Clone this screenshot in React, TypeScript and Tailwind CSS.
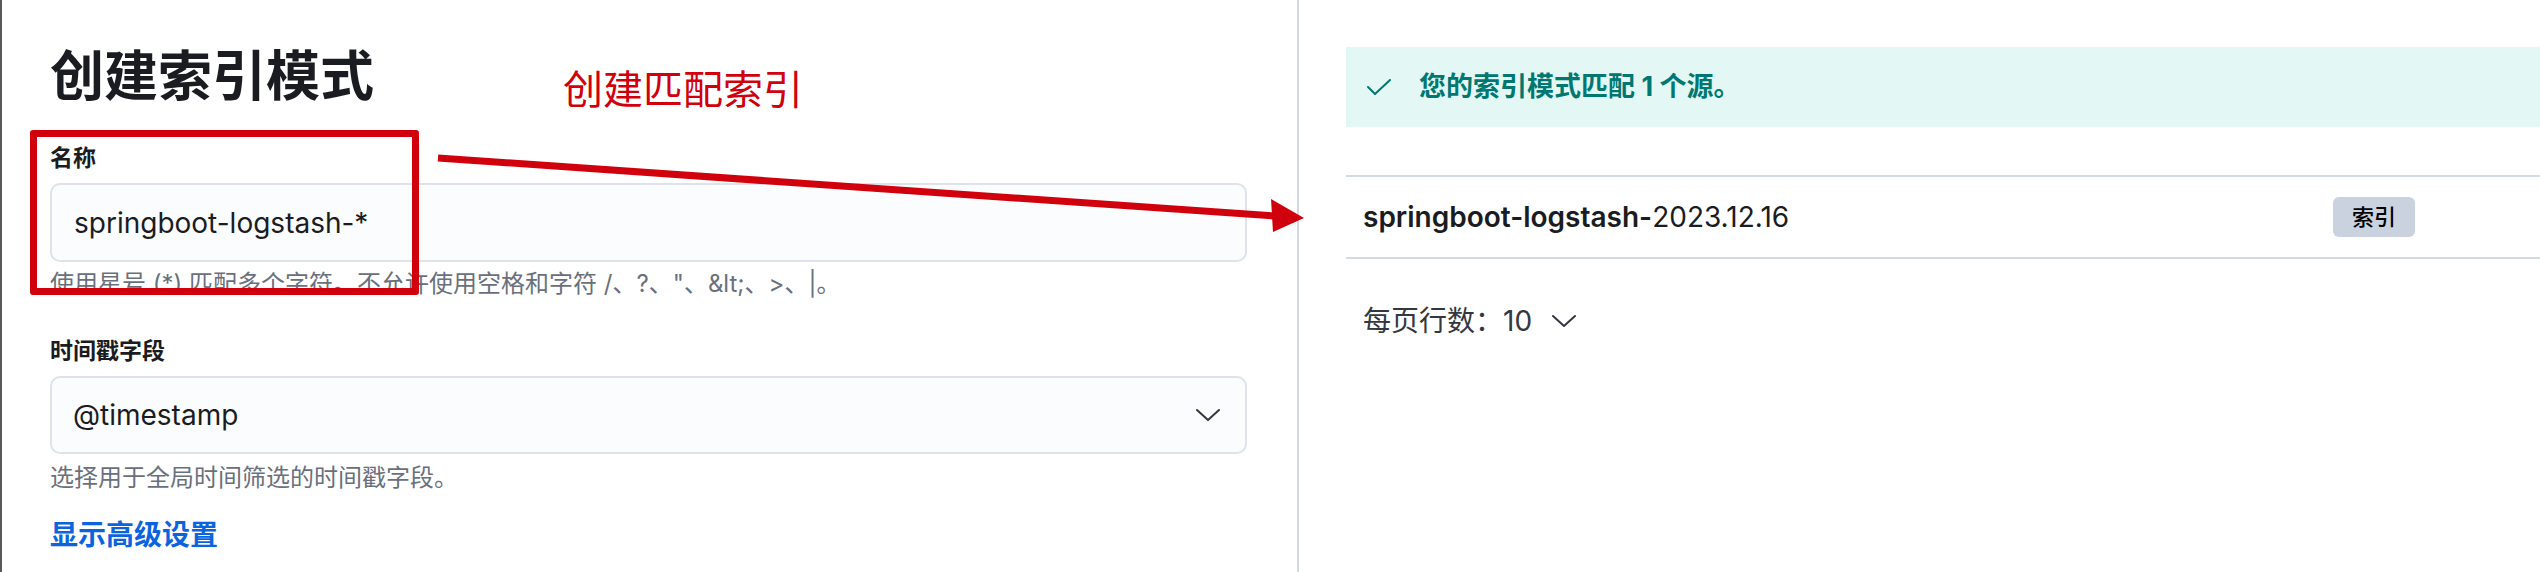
import React from 'react';

const watermarks = [
  { x: 260, y: 152 }, { x: 695, y: 152 }, { x: 1131, y: 152 }, { x: 1560, y: 152 }, { x: 2000, y: 152 }, { x: 2440, y: 152 },
  { x: 260, y: 413 }, { x: 695, y: 413 }, { x: 1131, y: 413 }, { x: 1560, y: 413 }, { x: 2000, y: 413 }, { x: 2440, y: 413 },
];

const ChevronDown = () => (
  <svg width="24" height="12" viewBox="0 0 24 12" fill="none">
    <polyline points="1,1 12,11 23,1" stroke="#343741" strokeWidth="2" strokeLinejoin="round" strokeLinecap="round" />
  </svg>
);

const App = () => {
  return (
    <div className="relative flex h-[572px] w-[2540px] overflow-hidden border-l-2 border-[#5a5a5a] bg-white font-[Inter,'Noto_Sans_CJK_SC',sans-serif] text-[#343741]">
      {/* left: form */}
      <div className="flex w-[1297px] flex-col border-r-2 border-[#d3dae6] pl-[48px] pr-[50px] pt-[50px]">
        <h1 className="text-[54px] font-bold leading-[54px] text-[#1a1c21]">创建索引模式</h1>

        <label className="mt-[42px] text-[23px] font-bold leading-[24px] text-[#1a1c21]">名称</label>
        <div className="mt-[13px] flex h-[79px] items-center rounded-[10px] border-2 border-[#dde2ec] bg-[#fbfcfd] pl-[22px] text-[28px] text-[#1a1c21]">
          springboot-logstash-*
        </div>
        <p className="mt-[10px] text-[24px] leading-[24px] text-[#69707d]">
          {'使用星号 (*) 匹配多个字符。不允许使用空格和字符 /、?、"、&lt;、>、|。'}
        </p>

        <label className="mt-[43px] text-[23px] font-bold leading-[24px] text-[#1a1c21]">时间戳字段</label>
        <div className="mt-[13px] flex h-[78px] items-center justify-between rounded-[10px] border-2 border-[#dde2ec] bg-[#fbfcfd] pl-[21px] pr-[25px] text-[28px] text-[#1a1c21]">
          <span>@timestamp</span>
          <ChevronDown />
        </div>
        <p className="mt-[12px] text-[24px] leading-[24px] text-[#69707d]">选择用于全局时间筛选的时间戳字段。</p>

        <a className="mt-[31px] text-[28px] font-bold leading-[28px] text-[#0b64dd]">显示高级设置</a>
      </div>

      {/* right: matches */}
      <div className="flex flex-1 flex-col pl-[47px] pt-[47px]">
        <div className="flex h-[80px] items-center bg-[#e3f7f4] pl-[21px]">
          <svg width="24" height="16" viewBox="0 0 24 16" fill="none">
            <polyline points="1,8 8,15 23,1" stroke="#007871" strokeWidth="2" strokeLinejoin="round" strokeLinecap="round" />
          </svg>
          <span className="ml-[28px] text-[27px] font-bold text-[#007871]">您的索引模式匹配 1 个源。</span>
        </div>

        <div className="mt-[48px] flex h-[84px] items-center justify-between border-y-2 border-[#d3dae6] pl-[17px] pr-[125px]">
          <span className="text-[28px] text-[#1a1c21]">
            <span className="font-semibold">springboot-logstash-</span>2023.12.16
          </span>
          <span className="flex h-[40px] items-center rounded-[6px] bg-[#cad1df] px-[19px] text-[22px] font-medium text-black">索引</span>
        </div>

        <div className="mt-[48px] flex items-center gap-[20px] pl-[17px] text-[28px] leading-[28px] text-[#343741]">
          <span>每页行数：10</span>
          <svg width="24" height="12" viewBox="0 0 24 12" fill="none">
            <polyline points="1,1 12,11 23,1" stroke="#343741" strokeWidth="2" strokeLinejoin="round" strokeLinecap="round" />
          </svg>
        </div>
      </div>

      {/* watermark */}
      {watermarks.map((w, i) => (
        <div
          key={i}
          className="pointer-events-none absolute -translate-x-1/2 -translate-y-1/2 rotate-[-21.8deg] whitespace-nowrap font-['DejaVu_Sans_Condensed',sans-serif] text-[32px] italic text-black/[0.025]"
          style={{ left: w.x, top: w.y }}
        >
          fuzhengwei3-702524
        </div>
      ))}

      {/* annotations */}
      <div className="pointer-events-none absolute left-[561px] top-[66px] text-[40px] leading-[48px] text-[#d0000c]">创建匹配索引</div>
      <div className="pointer-events-none absolute left-[28px] top-[130px] h-[165px] w-[389px] rounded-[3px] border-[7px] border-[#d0000c]" />
      <svg className="pointer-events-none absolute left-0 top-0" width="2540" height="572">
        <line x1="436" y1="158" x2="1272" y2="216" stroke="#d0000c" strokeWidth="7" />
        <polygon points="1269,199 1302,218 1271,232" fill="#d0000c" />
      </svg>
    </div>
  );
};

export default App;
